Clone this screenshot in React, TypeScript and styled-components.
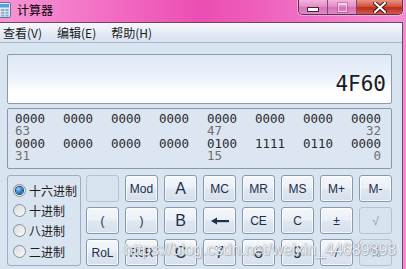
import styled, { createGlobalStyle } from "styled-components";

const GlobalStyle = createGlobalStyle`
  html, body {
    margin: 0;
    padding: 0;
  }
  body {
    width: 406px;
    height: 269px;
    overflow: hidden;
  }
`;

const Window = styled.div`
  position: relative;
  width: 406px;
  height: 269px;
  overflow: hidden;
  background: linear-gradient(
    to right,
    #f596d4 0%,
    #f270c5 25%,
    #ec4db2 50%,
    #f06fc4 75%,
    #f48ed0 100%
  );
  font-family: "Noto Sans CJK SC", sans-serif;
`;

const TitleBar = styled.div`
  height: 22px;
  display: flex;
  align-items: flex-start;
`;

const AppIcon = styled.svg`
  margin: 2px 0 0 -5px;
`;

const Title = styled.div`
  margin: 3px 0 0 6px;
  font-size: 12px;
  line-height: 14px;
  color: #000;
`;

const Controls = styled.div`
  margin-left: auto;
  margin-right: 3px;
  display: flex;
  height: 14px;
  border: 1px solid #5b3452;
  border-top: none;
  border-radius: 0 0 5px 5px;
  overflow: hidden;
  box-shadow: 0 0 0 1px rgba(255, 255, 255, 0.35);
`;

const CtrlButton = styled.div<{ $close?: boolean; $width: number }>`
  width: ${(p) => p.$width}px;
  display: flex;
  align-items: center;
  justify-content: center;
  border-left: 1px solid #7d4a70;
  background: ${(p) =>
    p.$close
      ? "linear-gradient(#e99283 0%, #d2553f 45%, #b92c1c 55%, #d55a45 100%)"
      : "linear-gradient(#f2b3dc 0%, #e590c8 45%, #d772b6 55%, #e08ac4 100%)"};
  &:first-child {
    border-left: none;
  }
`;

const MinGlyph = styled.div`
  width: 10px;
  height: 3px;
  background: #fff;
  border: 1px solid #3a2a3a;
  margin-top: 4px;
`;

const MaxGlyph = styled.div`
  width: 7px;
  height: 6px;
  border: 1px solid rgba(255, 255, 255, 0.55);
  border-top-width: 2px;
  box-shadow: 0 0 0 1px rgba(120, 60, 100, 0.35);
`;

const Client = styled.div`
  box-sizing: border-box;
  width: 403px;
  height: 247px;
  border-top: 1px solid #6d4663;
  border-right: 1px solid #6d4663;
  background: #d9e4f1;
`;

const MenuBar = styled.div`
  height: 19px;
  display: flex;
  align-items: center;
  gap: 15px;
  padding-left: 3px;
  border-bottom: 1px solid #a9b5c9;
  background: linear-gradient(#f6f8fc, #e3e9f5 60%, #d9e1f0);
`;

const MenuItem = styled.div`
  font-size: 12px;
  line-height: 19px;
  color: #1a1a1a;
`;

const Body = styled.div`
  position: relative;
  padding: 11px 0 0 7px;
`;

const Display = styled.div`
  box-sizing: border-box;
  width: 385px;
  height: 50px;
  border: 1px solid #8d99ad;
  border-radius: 2px;
  background: linear-gradient(#dfe9f6 0%, #eaf1fa 45%, #fdfeff 75%, #ffffff 100%);
  display: flex;
  align-items: flex-end;
  justify-content: flex-end;
  padding: 0 5px 8px 0;
  font-family: "DejaVu Sans Mono", monospace;
  font-size: 21px;
  line-height: 21px;
  color: #1a1a1a;
`;

const BitsPanel = styled.div`
  box-sizing: border-box;
  width: 385px;
  height: 61px;
  margin-top: 4px;
  border: 1px solid #8c97aa;
  border-radius: 2px;
  padding: 4px 0 0 7px;
  background: #dce6f2;
  font-family: "DejaVu Sans Mono", monospace;
  font-size: 12.5px;
  line-height: 12.5px;
`;

const BitRow = styled.div<{ $label?: boolean }>`
  display: grid;
  grid-template-columns: repeat(8, 30px);
  column-gap: 18px;
  color: ${(p) => (p.$label ? "#6f6f6f" : "#2a2a2a")};
  height: 12.4px;
`;

const BitLabel = styled.span<{ $col: number; $end?: boolean }>`
  grid-column: ${(p) => p.$col};
  justify-self: ${(p) => (p.$end ? "end" : "start")};
`;

const Lower = styled.div`
  display: flex;
  gap: 5px;
  margin-top: 6px;
`;

const RadioBox = styled.div`
  box-sizing: border-box;
  width: 74px;
  height: 91px;
  border: 1px solid #9eadc2;
  border-radius: 3px;
  padding: 4px 0 0 5px;
  display: flex;
  flex-direction: column;
`;

const RadioItem = styled.div`
  height: 20.3px;
  display: flex;
  align-items: center;
  gap: 3px;
  font-size: 12px;
  color: #1c1c1c;
`;

const RadioDot = styled.div<{ $checked?: boolean }>`
  box-sizing: border-box;
  width: 13px;
  height: 13px;
  border-radius: 50%;
  border: 1px solid #8b8e92;
  background: linear-gradient(135deg, #d9dcdf, #f8f9fa);
  display: flex;
  align-items: center;
  justify-content: center;
  &::after {
    content: "";
    width: 7px;
    height: 7px;
    border-radius: 50%;
    display: ${(p) => (p.$checked ? "block" : "none")};
    background: radial-gradient(circle at 35% 30%, #9fd6ff 0%, #2f86d6 45%, #0b4c99 100%);
    box-shadow: 0 0 0 1px #1f3f66;
  }
`;

const Keys = styled.div`
  display: grid;
  grid-template-columns: repeat(8, 33px);
  grid-auto-rows: 27px;
  column-gap: 6px;
  row-gap: 5px;
`;

const Key = styled.div<{ $big?: boolean; $off?: boolean }>`
  box-sizing: border-box;
  border-radius: 3px;
  border: 1px solid ${(p) => (p.$off ? "#b4c2d4" : "#8898ae")};
  background: ${(p) =>
    p.$off
      ? "#d8e3f0"
      : "linear-gradient(#f4f7fb 0%, #eaf0f7 48%, #dfe7f1 52%, #d6e0ec 100%)"};
  box-shadow: ${(p) => (p.$off ? "none" : "inset 0 0 0 1px rgba(255, 255, 255, 0.7)")};
  display: flex;
  align-items: center;
  justify-content: center;
  font-family: "Liberation Sans", sans-serif;
  font-size: ${(p) => (p.$big ? "16px" : "12px")};
  color: ${(p) => (p.$off ? "#8f9db0" : "#1d2f4a")};
`;

const Watermark = styled.div`
  position: absolute;
  left: 124px;
  top: 199px;
  font-family: "Liberation Sans", sans-serif;
  font-size: 16px;
  line-height: 16px;
  color: rgba(255, 255, 255, 0.88);
  text-shadow: 0 0 1px rgba(90, 100, 115, 0.8), 1px 1px 1px rgba(120, 130, 145, 0.45);
  pointer-events: none;
`;

function BackArrow() {
  return (
    <svg width="18" height="8" viewBox="0 0 18 8">
      <polygon points="0,4 6,0.5 6,7.5" fill="#1d2f4a" />
      <rect x="5" y="3" width="13" height="2.2" fill="#1d2f4a" />
    </svg>
  );
}

type KeyDef = { label: string; big?: boolean; off?: boolean };

const keys: KeyDef[] = [
  { label: "", off: true },
  { label: "Mod" },
  { label: "A", big: true },
  { label: "MC" },
  { label: "MR" },
  { label: "MS" },
  { label: "M+" },
  { label: "M-" },
  { label: "(" },
  { label: ")" },
  { label: "B", big: true },
  { label: "←" },
  { label: "CE" },
  { label: "C" },
  { label: "±" },
  { label: "√", off: true },
  { label: "RoL" },
  { label: "RoR" },
  { label: "C", big: true },
  { label: "7", big: true },
  { label: "8", big: true },
  { label: "9", big: true },
  { label: "/" },
  { label: "%", off: true },
];

const bases = ["十六进制", "十进制", "八进制", "二进制"];

function App() {
  return (
    <Window>
      <GlobalStyle />
      <TitleBar>
        <AppIcon width="16" height="16" viewBox="0 0 16 16">
          <rect x="0.5" y="0.5" width="15" height="15" rx="1.5" fill="#e4ebf2" stroke="#5e7894" />
          <rect x="2" y="2" width="12" height="3.5" fill="#5aa0de" />
          {[0, 1, 2].map((r) =>
            [0, 1, 2].map((c) => (
              <rect
                key={`${r}-${c}`}
                x={2 + c * 4.2}
                y={7 + r * 2.8}
                width="3.2"
                height="2"
                fill={c === 2 ? "#7fb1e0" : "#9aa9b9"}
              />
            ))
          )}
        </AppIcon>
        <Title>计算器</Title>
        <Controls>
          <CtrlButton $width={28}>
            <MinGlyph />
          </CtrlButton>
          <CtrlButton $width={28}>
            <MaxGlyph />
          </CtrlButton>
          <CtrlButton $width={45} $close>
            <svg width="14" height="11" viewBox="0 0 14 11">
              <path
                d="M2 1 L12 10 M12 1 L2 10"
                stroke="#3b1d1d"
                strokeWidth="4"
                strokeLinecap="square"
              />
              <path
                d="M2 1 L12 10 M12 1 L2 10"
                stroke="#ffffff"
                strokeWidth="2"
                strokeLinecap="square"
              />
            </svg>
          </CtrlButton>
        </Controls>
      </TitleBar>
      <Client>
        <MenuBar>
          <MenuItem>查看(V)</MenuItem>
          <MenuItem>编辑(E)</MenuItem>
          <MenuItem>帮助(H)</MenuItem>
        </MenuBar>
        <Body>
          <Display>4F60</Display>
          <BitsPanel>
            <BitRow>
              {["0000", "0000", "0000", "0000", "0000", "0000", "0000", "0000"].map((g, i) => (
                <span key={i}>{g}</span>
              ))}
            </BitRow>
            <BitRow $label>
              <BitLabel $col={1}>63</BitLabel>
              <BitLabel $col={5}>47</BitLabel>
              <BitLabel $col={8} $end>
                32
              </BitLabel>
            </BitRow>
            <BitRow>
              {["0000", "0000", "0000", "0000", "0100", "1111", "0110", "0000"].map((g, i) => (
                <span key={i}>{g}</span>
              ))}
            </BitRow>
            <BitRow $label>
              <BitLabel $col={1}>31</BitLabel>
              <BitLabel $col={5}>15</BitLabel>
              <BitLabel $col={8} $end>
                0
              </BitLabel>
            </BitRow>
          </BitsPanel>
          <Lower>
            <RadioBox>
              {bases.map((b, i) => (
                <RadioItem key={b}>
                  <RadioDot $checked={i === 0} />
                  {b}
                </RadioItem>
              ))}
            </RadioBox>
            <Keys>
              {keys.map((k, i) => (
                <Key key={i} $big={k.big} $off={k.off}>
                  {k.label === "←" ? <BackArrow /> : k.label}
                </Key>
              ))}
            </Keys>
          </Lower>
          <Watermark>https://blog.csdn.net/weixin_44689393</Watermark>
        </Body>
      </Client>
    </Window>
  );
}

export default App;
